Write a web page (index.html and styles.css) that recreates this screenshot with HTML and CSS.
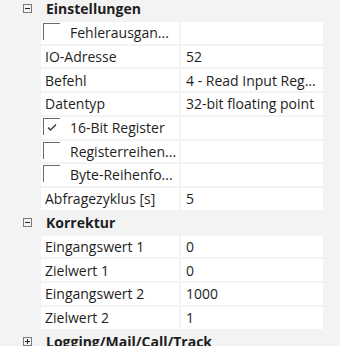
FILE: index.html
```html
<!DOCTYPE html>
<html lang="de">
<head>
  <meta charset="UTF-8">
  <meta name="viewport" content="width=device-width, initial-scale=1.0">
  <title>Eigenschaften</title>
  <link rel="stylesheet" href="styles.css">
</head>
<body>
  <div class="grid">
    <div class="cat">
      <svg class="toggle" width="9" height="9" viewBox="0 0 9 9"><rect x="0.5" y="0.5" width="8" height="8" fill="none" stroke="#7a7a7a"/><path d="M2 4.5h5" stroke="#222"/></svg>
      <span class="cat-name">Einstellungen</span>
    </div>
    <div class="row">
      <div class="name check"><span class="box"></span>Fehlerausgan...</div>
      <div class="value"></div>
    </div>
    <div class="row">
      <div class="name">IO-Adresse</div>
      <div class="value">52</div>
    </div>
    <div class="row">
      <div class="name">Befehl</div>
      <div class="value">4 - Read Input Reg...</div>
    </div>
    <div class="row">
      <div class="name">Datentyp</div>
      <div class="value">32-bit floating point</div>
    </div>
    <div class="row">
      <div class="name check"><span class="box"><svg width="15" height="15" viewBox="0 0 15 15"><path d="M4 8.5l2.5 2.5l5.5-5.5" fill="none" stroke="#333" stroke-width="1.3"/></svg></span>16-Bit Register</div>
      <div class="value"></div>
    </div>
    <div class="row">
      <div class="name check"><span class="box"></span>Registerreihen...</div>
      <div class="value"></div>
    </div>
    <div class="row">
      <div class="name check"><span class="box"></span>Byte-Reihenfo...</div>
      <div class="value"></div>
    </div>
    <div class="row">
      <div class="name">Abfragezyklus [s]</div>
      <div class="value">5</div>
    </div>

    <div class="cat">
      <svg class="toggle" width="9" height="9" viewBox="0 0 9 9"><rect x="0.5" y="0.5" width="8" height="8" fill="none" stroke="#7a7a7a"/><path d="M2 4.5h5" stroke="#222"/></svg>
      <span class="cat-name">Korrektur</span>
    </div>
    <div class="row">
      <div class="name">Eingangswert 1</div>
      <div class="value">0</div>
    </div>
    <div class="row">
      <div class="name">Zielwert 1</div>
      <div class="value">0</div>
    </div>
    <div class="row">
      <div class="name">Eingangswert 2</div>
      <div class="value">1000</div>
    </div>
    <div class="row">
      <div class="name">Zielwert 2</div>
      <div class="value">1</div>
    </div>

    <div class="cat">
      <svg class="toggle" width="9" height="9" viewBox="0 0 9 9"><rect x="0.5" y="0.5" width="8" height="8" fill="none" stroke="#7a7a7a"/><path d="M2 4.5h5M4.5 2v5" stroke="#222"/></svg>
      <span class="cat-name">Logging/Mail/Call/Track</span>
    </div>
  </div>
</body>
</html>
```

FILE: styles.css
```css
body {
  margin: 0;
  background-color: #f3f3f3;
  font-family: "Open Sans", "Noto Sans", sans-serif;
  font-size: 14px;
  color: #1e1e1e;
  overflow: hidden;
}
.grid {
  margin-top: -2px;
}
.cat {
  display: flex;
  align-items: center;
  height: 21.75px;
  margin-bottom: 2px;
  padding-left: 23px;
}
.toggle {
  flex: none;
  margin-right: 14px;
}
.cat-name {
  font-weight: bold;
  white-space: nowrap;
}
.row {
  display: grid;
  grid-template-columns: 138px 142px;
  column-gap: 2px;
  height: 21.75px;
  margin-bottom: 2px;
  margin-left: 41px;
}
.name, .value {
  background: #fff;
  display: flex;
  align-items: center;
  white-space: nowrap;
  overflow: hidden;
}
.name {
  padding-left: 4px;
}
.value {
  padding-left: 5px;
}
.name.check {
  padding-left: 2px;
  align-items: flex-start;
  line-height: 21px;
}
.box {
  flex: none;
  width: 16px;
  height: 16px;
  margin-top: 1px;
  margin-right: 10px;
  border-top: 1px solid #6a6a6a;
  border-left: 1px solid #6a6a6a;
}
.box svg {
  display: block;
}
```
